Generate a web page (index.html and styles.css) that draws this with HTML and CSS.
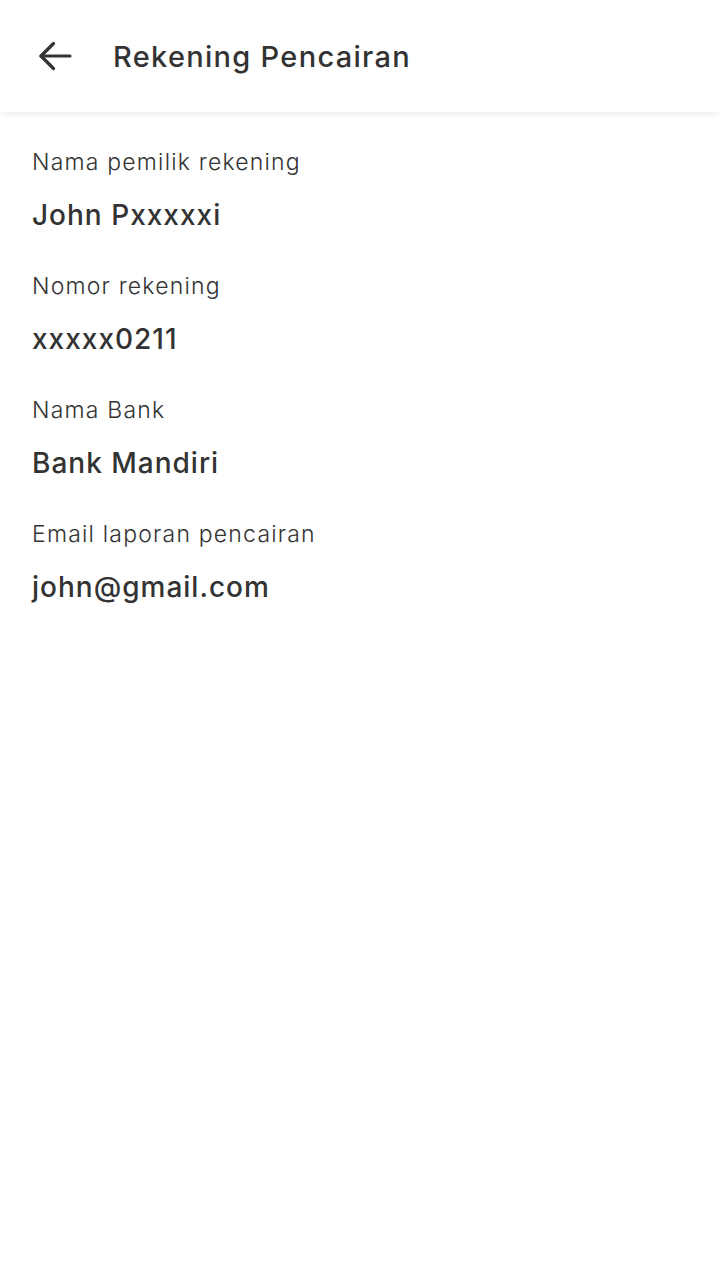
FILE: index.html
```html
<!DOCTYPE html>
<html lang="id">
<head>
<meta charset="utf-8">
<title>Rekening Pencairan</title>
<link rel="stylesheet" href="styles.css">
</head>
<body>
<header class="appbar">
  <button class="back" aria-label="Kembali">
    <svg width="36" height="32" viewBox="0 0 36 32" fill="none" stroke="#333333" stroke-width="3.2" stroke-linecap="round" stroke-linejoin="round">
      <path d="M34 16H5"/>
      <path d="M17.5 3.5L5 16l12.5 12.5"/>
    </svg>
  </button>
  <h1 class="title">Rekening Pencairan</h1>
</header>
<main class="content">
  <div class="field">
    <div class="label">Nama pemilik rekening</div>
    <div class="value">John Pxxxxxi</div>
  </div>
  <div class="field">
    <div class="label">Nomor rekening</div>
    <div class="value">xxxxx0211</div>
  </div>
  <div class="field">
    <div class="label">Nama Bank</div>
    <div class="value">Bank Mandiri</div>
  </div>
  <div class="field">
    <div class="label">Email laporan pencairan</div>
    <div class="value">john@gmail.com</div>
  </div>
</main>
</body>
</html>
```
FILE: styles.css
```css
* { box-sizing: border-box; }
html, body {
  margin: 0;
  padding: 0;
  background: #ffffff;
  font-family: Inter, "Noto Sans", "DejaVu Sans", sans-serif;
  color: #333333;
}
.appbar {
  height: 112px;
  display: flex;
  align-items: center;
  padding-left: 36px;
  background: #ffffff;
  box-shadow: 0 2px 6px rgba(0, 0, 0, 0.08);
  position: relative;
}
.back {
  border: 0;
  background: transparent;
  padding: 0;
  margin: 0;
  width: 36px;
  height: 32px;
  display: flex;
  align-items: center;
  justify-content: center;
}
.title {
  margin: 2px 0 0 41px;
  font-size: 29px;
  font-weight: 500;
  line-height: 40px;
  letter-spacing: 1.3px;
  color: #333333;
}
.content {
  padding: 34px 32px 0 32px;
  display: flex;
  flex-direction: column;
  gap: 35px;
}
.field {
  display: flex;
  flex-direction: column;
  gap: 17px;
}
.label {
  font-size: 23px;
  line-height: 32px;
  font-weight: 300;
  letter-spacing: 1.2px;
  color: #333333;
}
.value {
  font-size: 28px;
  line-height: 40px;
  font-weight: 500;
  letter-spacing: 1px;
  color: #333333;
}
```
